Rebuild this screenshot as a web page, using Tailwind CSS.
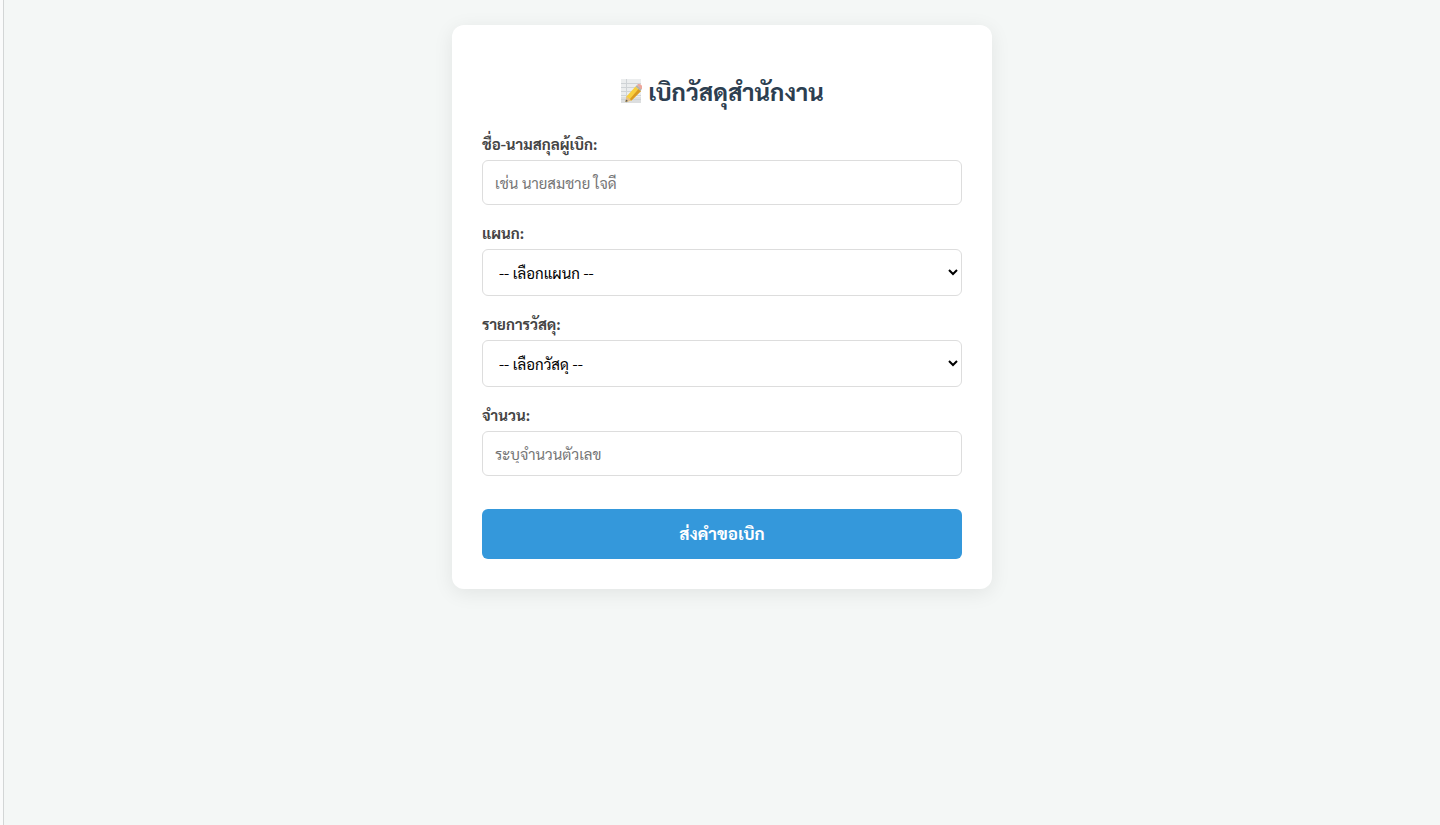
<!DOCTYPE html>
<html lang="th">
  <head>
    <meta charset="UTF-8" />
    <meta name="viewport" content="width=device-width, initial-scale=1.0" />
    <title>เบิกวัสดุสำนักงาน</title>
    <script src="https://cdn.jsdelivr.net/npm/@tailwindcss/browser@4"></script>
  </head>
  <body class="flex min-h-screen bg-[#fafbfb] font-['Sarabun','Noto_Sans_Thai','Open_Sans',sans-serif]">
    <main class="ml-[3px] flex-1 border-l border-[#d3d6d6] bg-[#f4f7f6] py-[25px]">
      <div class="mx-auto max-w-[540px] rounded-xl bg-white px-[30px] pt-[46px] pb-[30px] shadow-[0_4px_20px_rgba(0,0,0,0.08)]">
        <h1 class="flex h-10 items-center justify-center gap-1.5 text-2xl font-bold text-[#2c3e50]">
          <svg class="h-6 w-[22px]" viewBox="0 0 22 24" aria-hidden="true">
            <path d="M1 0h20v24H1z" fill="#ebedee" />
            <path d="M1 18h20v6H1z" fill="#dcdedf" />
            <path d="M1 4.500h20M1 8.500h20M1 12.500h20M1 16.500h20M1 20.500h20M6.500 0v24" stroke="#cfd3d6" fill="none" />
            <path d="M5.500 23l1-5.500L15.500 7.500l5.500 4.500-9.500 9.500z" fill="#f8cf3e" />
            <path d="M9.500 20.500L18.500 10l2.500 2-9.500 9.500z" fill="#d99a22" />
            <path d="M17 6l1-1q2-.5 3.500 1.200T22 9.500l-1 1.200z" fill="#eda79c" />
            <path d="M15.500 7.500L17 6l4.500 4.500L20.500 12z" fill="#b3b3ad" />
            <path d="M5.500 23l1-5.500 5 4z" fill="#e5c08a" />
            <path d="M5.500 23l.5-2.500 2 1.600z" fill="#555" />
          </svg>
          เบิกวัสดุสำนักงาน
        </h1>

        <form class="mt-[22px]">
          <!-- Requester -->
          <label for="requester" class="block h-[27px] text-[15px] leading-[22px] font-bold text-[#444]">ชื่อ-นามสกุลผู้เบิก:</label>
          <input
            type="text"
            id="requester"
            placeholder="เช่น นายสมชาย ใจดี"
            class="mb-[17px] block h-[45px] w-full rounded-md border border-[#ddd] bg-white px-3 text-[15px] placeholder:text-[#757575]"
          />

          <!-- Department -->
          <label for="department" class="block h-[27px] text-[15px] leading-[22px] font-bold text-[#444]">แผนก:</label>
          <select id="department" class="mb-[17px] block h-[47px] w-full rounded-md border border-[#ddd] bg-white pl-3 text-[15px] text-black">
            <option>-- เลือกแผนก --</option>
          </select>

          <!-- Item -->
          <label for="item" class="block h-[27px] text-[15px] leading-[22px] font-bold text-[#444]">รายการวัสดุ:</label>
          <select id="item" class="mb-[17px] block h-[47px] w-full rounded-md border border-[#ddd] bg-white pl-3 text-[15px] text-black">
            <option>-- เลือกวัสดุ --</option>
          </select>

          <!-- Quantity -->
          <label for="quantity" class="block h-[27px] text-[15px] leading-[22px] font-bold text-[#444]">จำนวน:</label>
          <input
            type="number"
            id="quantity"
            placeholder="ระบุจำนวนตัวเลข"
            class="block h-[45px] w-full rounded-md border border-[#ddd] bg-white px-3 text-[15px] placeholder:text-[#757575]"
          />

          <button type="submit" class="mt-[33px] h-[50px] w-full rounded-md bg-[#3498db] text-[17px] font-bold text-white hover:bg-[#2980b9]">
            ส่งคำขอเบิก
          </button>
        </form>
      </div>
    </main>
  </body>
</html>
